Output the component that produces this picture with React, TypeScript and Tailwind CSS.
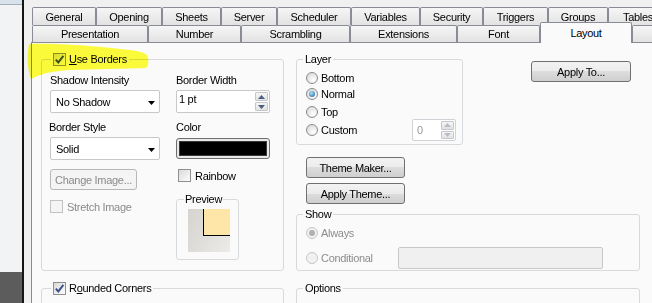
import React from "react";
import clsx from "clsx";

const txt = "text-[11px] leading-[14px] tracking-[-0.3px]";

function Check({ on, disabled }: { on?: boolean; disabled?: boolean }) {
  return (
    <span
      className={clsx(
        "w-[13px] h-[13px] shrink-0 border flex items-center justify-center",
        disabled
          ? "border-[#c2c2c2] bg-[#f4f4f4]"
          : "border-[#8e8f8f] bg-[linear-gradient(135deg,#d9d9d9,#fdfdfd)]"
      )}
    >
      {on && (
        <svg width="11" height="11" viewBox="0 0 11 11">
          <path d="M1.8 5.6 L4.3 8.4 L9.4 1.8" fill="none" stroke="#3a4f86" strokeWidth="1.9" />
        </svg>
      )}
    </span>
  );
}

function Radio({ on, disabled }: { on?: boolean; disabled?: boolean }) {
  return (
    <span
      className={clsx(
        "w-[12px] h-[12px] shrink-0 rounded-full border flex items-center justify-center",
        disabled
          ? "border-[#c6c6c6] bg-[#f1f1f1]"
          : "border-[#8b8b8b] bg-[radial-gradient(circle_at_65%_70%,#ffffff,#d3d3d3)]"
      )}
    >
      {on && (
        <span
          className={clsx(
            "w-[6px] h-[6px] rounded-full",
            disabled ? "bg-[#b0b0b0]" : "bg-[radial-gradient(circle_at_40%_35%,#a6e4ff,#1b5890)]"
          )}
        />
      )}
    </span>
  );
}

function Btn({ label, className, disabled }: { label: string; className: string; disabled?: boolean }) {
  return (
    <div
      className={clsx(
        "shrink-0 self-start flex items-center justify-center rounded-[3px] border",
        disabled
          ? "border-[#b5b8ba] bg-[#f4f4f4] text-[#8a8a8a]"
          : "border-[#707070] bg-[linear-gradient(#f3f3f3_0%,#ebebeb_50%,#dddddd_50%,#cfcfcf_100%)] text-black",
        className
      )}
    >
      {label}
    </div>
  );
}

function Tri({ up, color = "#000" }: { up?: boolean; color?: string }) {
  return (
    <svg width="7" height="4" viewBox="0 0 7 4">
      <path d={up ? "M0 4 L3.5 0 L7 4 Z" : "M0 0 L7 0 L3.5 4 Z"} fill={color} />
    </svg>
  );
}

function Dropdown({ value }: { value: string }) {
  return (
    <div className="shrink-0 w-[110px] h-[23px] mt-[3px] border border-[#c8c8c8] rounded-[2px] bg-white flex items-center justify-between pl-[5px] pr-[4px]">
      <span>{value}</span>
      <span className="mt-[2px]">
        <Tri />
      </span>
    </div>
  );
}

function SpinBtns({ light }: { light?: boolean }) {
  const c = light ? "#b8bcc4" : "#4d5f80";
  return (
    <div className="w-[15px] flex flex-col gap-[1px] p-[1px]">
      <div className="flex-1 flex items-center justify-center border border-[#c3c7cc] rounded-[1px] bg-[linear-gradient(#f6f6f6,#e2e2e2)]">
        <Tri up color={c} />
      </div>
      <div className="flex-1 flex items-center justify-center border border-[#c3c7cc] rounded-[1px] bg-[linear-gradient(#f6f6f6,#e2e2e2)]">
        <Tri color={c} />
      </div>
    </div>
  );
}

const tabCls =
  "shrink-0 flex items-center justify-center border-t border-l border-r border-[#898c95] rounded-t-[2px] bg-[linear-gradient(#f6f6f6,#e2e2e2)]";

const box = "shrink-0 border border-[#d6dadd] rounded-[3px]";

export default function App() {
  const row1: [string, string][] = [
    ["General", "w-[64px]"],
    ["Opening", "w-[66px]"],
    ["Sheets", "w-[59px]"],
    ["Server", "w-[56px]"],
    ["Scheduler", "w-[74px]"],
    ["Variables", "w-[69px]"],
    ["Security", "w-[63px]"],
    ["Triggers", "w-[65px]"],
    ["Groups", "w-[60px]"],
    ["Tables", "w-[60px]"],
  ];
  const row2: [string, string][] = [
    ["Presentation", "w-[116px]"],
    ["Number", "w-[93px]"],
    ["Scrambling", "w-[109px]"],
    ["Extensions", "w-[107px]"],
    ["Font", "w-[83px]"],
    ["Layout", "w-[92px]"],
    ["", "w-[40px]"],
  ];

  return (
    <div
      className={clsx(
        "relative w-[652px] h-[303px] overflow-hidden flex text-black font-['Liberation_Sans',Arial,sans-serif]",
        txt
      )}
    >
      {/* window behind */}
      <div className="w-[22px] shrink-0 flex flex-col">
        <div className="shrink-0 h-[5px] bg-[#d9e1ea] border-b border-[#a5afbb]" />
        <div className="flex-1 bg-[#f2f3f5]" />
        <div className="shrink-0 h-[31px] bg-[#5c5c5c]" />
      </div>
      <div className="w-[2px] shrink-0 bg-[#151515]" />

      <div className="flex-1 min-w-0 min-h-0 bg-[#f0f0f0] pl-[7px] pt-[7px] flex flex-col">
        {/* tabs */}
        <div className="shrink-0 flex ml-[1px] h-[18px]">
          {row1.map(([l, w]) => (
            <div key={l} className={clsx(tabCls, w)}>
              {l}
            </div>
          ))}
        </div>
        <div className="shrink-0 flex items-start ml-[1px] h-[17px]">
          {row2.map(([l, w]) =>
            l === "Layout" ? (
              <div
                key={l}
                className={clsx(
                  "shrink-0 relative z-10 -mt-[3px] -mb-px h-[21px] flex items-start justify-center pt-[3px] border-t border-l border-r border-[#898c95] rounded-t-[2px] bg-[#fafafa]",
                  w
                )}
              >
                {l}
              </div>
            ) : (
              <div key={l || "x"} className={clsx(tabCls, "h-[17px]", w)}>
                {l}
              </div>
            )
          )}
        </div>

        {/* panel */}
        <div className="flex-1 min-h-0 overflow-hidden border-l border-t border-[#898c95] bg-[#fafafa] flex pl-[9px]">
          {/* left column */}
          <div className="w-[243px] shrink-0 flex flex-col">
            <fieldset className={clsx(box, "w-[243px] h-[219px] mt-[9px]")}>
              <legend className="ml-[9px] px-[2px] h-[14px] flex items-center gap-[3px]">
                <Check on />
                <span>
                  <span className="underline">U</span>se Borders
                </span>
              </legend>
              <div className="flex pl-[8px]">
                <div className="w-[110px] flex flex-col">
                  <span className="shrink-0 mt-[7px]">Shadow Intensity</span>
                  <Dropdown value="No Shadow" />
                  <span className="shrink-0 mt-[7px] -ml-px">Border Style</span>
                  <Dropdown value="Solid" />
                  <Btn label="Change Image..." disabled className="mt-[9px] w-[87px] h-[21px]" />
                  <div className="shrink-0 mt-[10px] h-[13px] flex items-center gap-[4px] text-[#8a8a8a]">
                    <Check disabled />
                    <span>Stretch Image</span>
                  </div>
                </div>
                <div className="w-[94px] ml-[16px] flex flex-col">
                  <span className="shrink-0 mt-[7px]">Border Width</span>
                  <div className="shrink-0 w-[94px] h-[23px] mt-[3px] border border-[#c8c8c8] rounded-[2px] bg-white flex">
                    <span className="flex-1 pl-[2px] pt-[1px]">1 pt</span>
                    <SpinBtns />
                  </div>
                  <span className="shrink-0 mt-[7px]">Color</span>
                  <div className="shrink-0 w-[94px] h-[21px] mt-[4px] border border-[#6f6f6f] rounded-[3px] bg-[#e9e9e9] p-[2px]">
                    <div className="h-full bg-black border border-[#3a3a3a]" />
                  </div>
                  <div className="shrink-0 mt-[10px] h-[13px] flex items-center gap-[4px] ml-[2px]">
                    <Check />
                    <span>Rainbow</span>
                  </div>
                  <fieldset className={clsx(box, "w-[63px] h-[68px] mt-[10px]")}>
                    <legend className="ml-[7px] px-[1px] h-[14px]">Preview</legend>
                    <div className="ml-[11px] mt-[3px] w-[42px] h-[43px] flex justify-end items-start bg-[linear-gradient(115deg,#d6d4cf,#e2e0dc_55%,#ecebe8)]">
                      <div className="w-[27px] h-[27px] bg-[#fde6a8] border-l border-b border-black" />
                    </div>
                  </fieldset>
                </div>
              </div>
            </fieldset>

            <fieldset className={clsx(box, "w-[243px] h-[60px] mt-[10px]")}>
              <legend className="ml-[9px] px-[2px] h-[14px] flex items-center gap-[3px]">
                <Check on />
                <span>
                  R<span className="underline">o</span>unded Corners
                </span>
              </legend>
            </fieldset>
          </div>

          {/* right column */}
          <div className="ml-[12px] shrink-0 flex flex-col">
            <div className="shrink-0 flex items-start">
              <fieldset className={clsx(box, "w-[167px] h-[93px] mt-[9px]")}>
                <legend className="ml-[6px] px-[2px] h-[14px]">Layer</legend>
                <div className="flex flex-col pl-[9px]">
                  <div className="mt-[5px] h-[14px] flex items-center gap-[3px]">
                    <Radio />
                    <span>Bottom</span>
                  </div>
                  <div className="mt-[2px] h-[14px] flex items-center gap-[3px]">
                    <Radio on />
                    <span>Normal</span>
                  </div>
                  <div className="mt-[4px] h-[14px] flex items-center gap-[3px]">
                    <Radio />
                    <span>Top</span>
                  </div>
                  <div className="h-[22px] flex items-center gap-[3px]">
                    <Radio />
                    <span>Custom</span>
                    <div className="ml-auto mr-[6px] w-[44px] h-[22px] border border-[#cfd2d6] rounded-[2px] bg-white flex">
                      <span className="flex-1 pl-[4px] pt-[3px] text-[#9a9a9a]">0</span>
                      <SpinBtns light />
                    </div>
                  </div>
                </div>
              </fieldset>
              <Btn label="Apply To..." className="ml-[68px] mt-[18px] w-[100px] h-[21px]" />
            </div>

            <Btn label="Theme Maker..." className="ml-[10px] mt-[12px] w-[99px] h-[21px]" />
            <Btn label="Apply Theme..." className="ml-[10px] mt-[5px] w-[99px] h-[21px]" />

            <fieldset className={clsx(box, "w-[344px] h-[64px] mt-[3px]")}>
              <legend className="ml-[6px] px-[2px] h-[14px]">Show</legend>
              <div className="flex flex-col pl-[9px] text-[#8d8d8d]">
                <div className="mt-[5px] h-[14px] flex items-center gap-[3px]">
                  <Radio on disabled />
                  <span>Always</span>
                </div>
                <div className="mt-[7px] h-[22px] flex items-center">
                  <Radio disabled />
                  <span className="w-[80px] pl-[3px]">Conditional</span>
                  <div className="w-[205px] h-[22px] border border-[#c8c8c8] rounded-[2px] bg-[#f0f0f0]" />
                </div>
              </div>
            </fieldset>

            <fieldset className={clsx(box, "w-[344px] h-[60px] mt-[10px]")}>
              <legend className="ml-[6px] px-[2px] h-[14px]">Options</legend>
            </fieldset>
          </div>
        </div>
      </div>

      {/* highlighter stroke drawn over the screenshot */}
      <svg
        className="absolute left-0 top-0 pointer-events-none mix-blend-multiply"
        width="652"
        height="303"
        viewBox="0 0 652 303"
      >
        <path
          d="M29 44 C55 43 95 46 120 49 C134 50 144 52 147 55 C149 59 149 65 146 68 C125 69 95 69 70 70 C52 71 40 74 31 79 C27 70 27 52 29 44 Z"
          fill="#ffff3c"
        />
      </svg>
    </div>
  );
}
